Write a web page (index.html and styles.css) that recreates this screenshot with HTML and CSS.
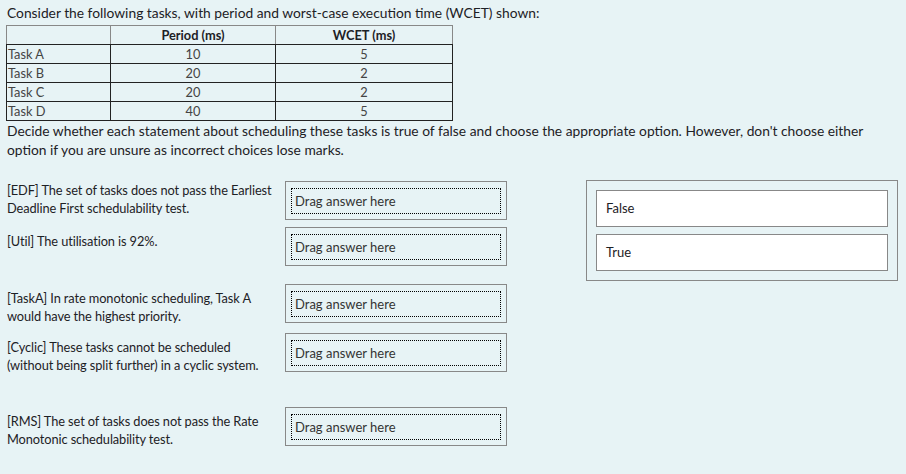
FILE: index.html
```html
<!DOCTYPE html>
<html lang="en">
<head>
    <meta charset="UTF-8">
    <title>Scheduling question</title>
    <link rel="stylesheet" href="styles.css">
</head>
<body>
<div class="question">
    <p class="lead">Consider the following tasks, with period and worst-case execution time (WCET) shown:</p>
    <table class="tasks">
        <tr>
            <th class="name"></th>
            <th class="period">Period (ms)</th>
            <th class="wcet">WCET (ms)</th>
        </tr>
        <tr><td class="name">Task A</td><td>10</td><td>5</td></tr>
        <tr><td class="name">Task B</td><td>20</td><td>2</td></tr>
        <tr><td class="name">Task C</td><td>20</td><td>2</td></tr>
        <tr><td class="name">Task D</td><td>40</td><td>5</td></tr>
    </table>
    <p class="lead">Decide whether each statement about scheduling these tasks is true of false and choose the appropriate option. However, don't choose either option if you are unsure as incorrect choices lose marks.</p>

    <div class="dragarea">
        <div class="statements">
            <div class="item first">
                <div class="stem">[EDF] The set of tasks does not pass the Earliest Deadline First schedulability test.</div>
                <div class="drop"><div class="slot">Drag answer here</div></div>
            </div>
            <div class="item wide">
                <div class="stem">[Util] The utilisation is 92%.</div>
                <div class="drop"><div class="slot">Drag answer here</div></div>
            </div>
            <div class="item">
                <div class="stem">[TaskA] In rate monotonic scheduling, Task A would have the highest priority.</div>
                <div class="drop"><div class="slot">Drag answer here</div></div>
            </div>
            <div class="item widest">
                <div class="stem">[Cyclic] These tasks cannot be scheduled (without being split further) in a cyclic system.</div>
                <div class="drop"><div class="slot">Drag answer here</div></div>
            </div>
            <div class="item">
                <div class="stem">[RMS] The set of tasks does not pass the Rate Monotonic schedulability test.</div>
                <div class="drop"><div class="slot">Drag answer here</div></div>
            </div>
        </div>
        <div class="choices">
            <div class="choice">False</div>
            <div class="choice">True</div>
        </div>
    </div>
</div>
</body>
</html>
```

FILE: styles.css
```css
body,html{
    margin: 0;
    padding: 0;
}
body{
    background-color: #e7f3f5;
    color: #1d2125;
    font-family: "Lato", "Liberation Sans", sans-serif;
    font-size: 13.8px;
}
.question{
    padding: 3px 8px 0 6px;
}
.lead{
    margin: 0;
    padding-left: 1px;
    line-height: 19px;
}
.tasks{
    border-collapse: collapse;
    margin-top: 3px;
    font-size: 12.8px;
}
.tasks th,
.tasks td{
    height: 18px;
    padding: 0 1px;
    line-height: 18px;
    text-align: center;
}
.tasks th{
    border: 1px solid #888;
    border-bottom-color: #222;
    font-weight: bold;
}
.tasks td{
    border: 1px solid #222;
    color: #444;
}
.tasks .name{
    width: 101px;
    text-align: left;
}
.tasks .period{
    width: 162px;
}
.tasks .wcet{
    width: 174px;
}
.dragarea{
    display: flex;
    justify-content: space-between;
    align-items: flex-start;
    margin-top: 21px;
}
.statements{
    display: flex;
    flex-direction: column;
    padding-top: 1px;
}
.item{
    display: flex;
    align-items: flex-start;
    margin-bottom: 8px;
}
.item.first{
    margin-bottom: 7px;
}
.item.first .stem{
    padding-top: 0;
}
.item.wide{
    margin-bottom: 18px;
}
.item.widest{
    margin-bottom: 33px;
}
.stem{
    width: 269px;
    padding: 5px 0 0 1px;
    font-size: 12.8px;
    letter-spacing: -0.1px;
    line-height: 18px;
}
.drop{
    width: 210px;
    margin-left: 9px;
    padding: 6px 5px 5px;
    border: 1px solid #888;
}
.slot{
    height: 24px;
    padding-left: 3px;
    border: 1px dotted #000;
    font-size: 13px;
    line-height: 24px;
    color: #333;
}
.choices{
    display: flex;
    flex-direction: column;
    gap: 7px;
    width: 292px;
    padding: 9px;
    border: 1px solid #888;
}
.choice{
    height: 35px;
    padding-left: 9px;
    background-color: #fff;
    border: 1px solid #888;
    font-size: 13px;
    line-height: 35px;
}
```
